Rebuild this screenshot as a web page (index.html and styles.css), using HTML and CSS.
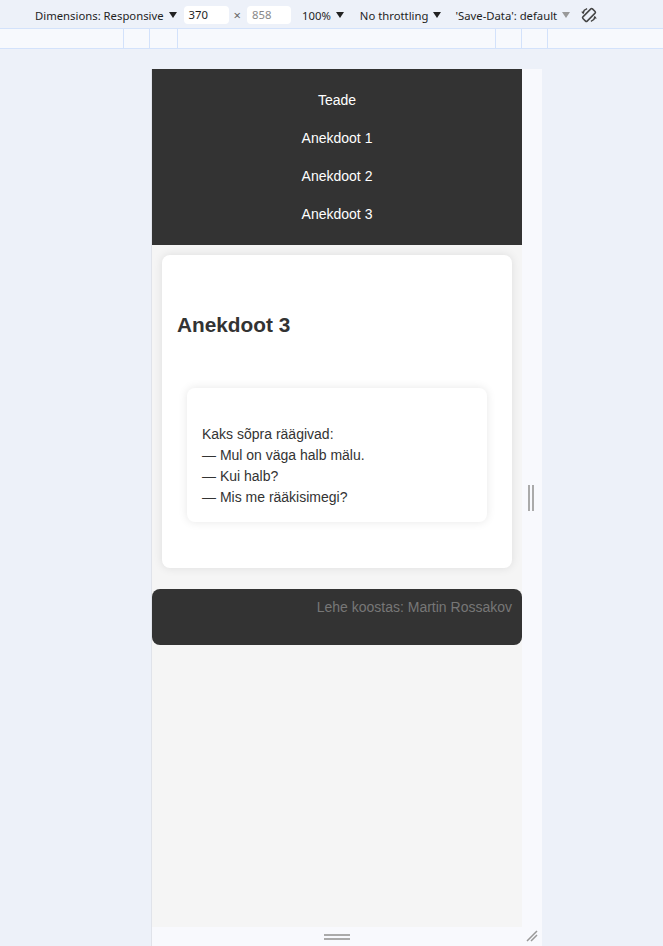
FILE: index.html
```html
<!DOCTYPE html>
<html lang="et">
<head>
    <meta charset="UTF-8">
    <meta name="viewport" content="width=device-width, initial-scale=1.0">
    <title>Anekdoodid</title>
    <link rel="stylesheet" href="styles.css">
</head>
<body>

    <div class="toolbar">
        <span class="tb-item tb-dims">Dimensions: Responsive<span class="arrow"></span></span>
        <span class="tb-input">370</span>
        <span class="tb-times">&times;</span>
        <span class="tb-input tb-input-dim">858</span>
        <span class="tb-item tb-zoom">100%<span class="arrow"></span></span>
        <span class="tb-item tb-throttle">No throttling<span class="arrow"></span></span>
        <span class="tb-item tb-save">'Save-Data': default<span class="arrow arrow-dim"></span></span>
        <svg class="tb-rotate" width="18" height="18" viewBox="0 0 24 24">
            <g fill="none" stroke="#444" stroke-width="2">
                <rect x="8" y="3" width="8" height="18" rx="1.5" transform="rotate(45 12 12)"/>
                <path d="M3.5 9.5 A9.5 9.5 0 0 1 9.5 3.5"/>
                <path d="M20.5 14.5 A9.5 9.5 0 0 1 14.5 20.5"/>
            </g>
            <path d="M1.5 7.5 L4.5 11 L6.2 7.2 Z" fill="#444"/>
            <path d="M22.5 16.5 L19.5 13 L17.8 16.8 Z" fill="#444"/>
        </svg>
    </div>

    <div class="ruler">
        <div class="ruler-seg" style="width: 124px"></div>
        <div class="ruler-seg" style="width: 26px"></div>
        <div class="ruler-seg" style="width: 28px"></div>
        <div class="ruler-seg" style="width: 318px"></div>
        <div class="ruler-seg" style="width: 26px"></div>
        <div class="ruler-seg" style="width: 26px"></div>
        <div class="ruler-seg"></div>
    </div>

    <div class="stage">
        <div class="device">
            <div class="viewport">
                <header class="site-header">
                    <nav class="nav">
                        <a href="#">Teade</a>
                        <a href="#">Anekdoot 1</a>
                        <a href="#">Anekdoot 2</a>
                        <a href="#">Anekdoot 3</a>
                    </nav>
                </header>

                <main class="content">
                    <section class="card">
                        <h2>Anekdoot 3</h2>
                        <div class="joke">
                            Kaks sõpra räägivad:<br>
                            — Mul on väga halb mälu.<br>
                            — Kui halb?<br>
                            — Mis me rääkisimegi?
                        </div>
                    </section>
                </main>

                <footer class="site-footer">Lehe koostas: Martin Rossakov</footer>
            </div>

            <div class="gutter-right">
                <span class="grip-v"></span>
            </div>
            <div class="gutter-bottom">
                <span class="grip-h"></span>
            </div>
            <div class="gutter-corner">
                <svg width="14" height="14" viewBox="0 0 14 14">
                    <path d="M2 12 L12 2 M6 12 L12 6" stroke="#999" stroke-width="1.5"/>
                </svg>
            </div>
        </div>
    </div>

</body>
</html>
```

FILE: styles.css
```css
body {
    margin: 0;
    background-color: #edf1f9;
    font-family: "Noto Sans", Arial, sans-serif;
}

/* devtools bar */
.toolbar {
    height: 26px;
    padding-top: 2px;
    display: flex;
    align-items: center;
    padding-left: 35px;
    border-bottom: 1px solid #d3e2fb;
    font-size: 11.3px;
    color: #1f1f1f;
    white-space: nowrap;
}
.tb-item {
    display: flex;
    align-items: center;
    margin-right: 16px;
}
.arrow {
    display: inline-block;
    width: 0;
    height: 0;
    margin-left: 5px;
    border-left: 4px solid transparent;
    border-right: 4px solid transparent;
    border-top: 6px solid #222;
}
.arrow-dim {
    border-top-color: #999;
}
.tb-dims {
    margin-right: 7px;
}
.tb-input {
    width: 40px;
    height: 18px;
    line-height: 18px;
    padding-left: 5px;
    background: #fff;
    border-radius: 4px;
}
.tb-input-dim {
    color: #888;
    margin-right: 11px;
    width: 39px;
}
.tb-times {
    color: #666;
    margin: 0 6px 0 5px;
    font-size: 13px;
}
.tb-throttle {
    margin-right: 14px;
}
.tb-save {
    margin-right: 10px;
}
.ruler {
    height: 19px;
    display: flex;
    background-color: #f7f9fd;
    border-bottom: 1px solid #d3e2fb;
}
.ruler-seg {
    border-right: 1px solid #d3e2fb;
    box-sizing: border-box;
}
.ruler-seg:last-child {
    border-right: none;
}

/* device frame */
.stage {
    padding: 20px 0 0 151px;
}
.device {
    display: grid;
    grid-template-columns: 370px 20px;
    grid-template-rows: 858px 19px;
    width: 390px;
    border-left: 1px solid #e0e3ea;
}
.viewport {
    background-color: #f5f5f5;
    font-family: "Liberation Sans", Arial, sans-serif;
    color: #333;
    overflow: hidden;
}
.gutter-right {
    background-color: #f8f9fd;
    display: flex;
    align-items: center;
    justify-content: center;
}
.grip-v {
    width: 2px;
    height: 26px;
    border-left: 2px solid #aaa;
    border-right: 2px solid #aaa;
    margin-right: 2px;
}
.gutter-bottom {
    background-color: #f8f9fd;
    display: flex;
    justify-content: center;
    padding-top: 7px;
    box-sizing: border-box;
}
.grip-h {
    width: 26px;
    height: 2px;
    border-top: 2px solid #aaa;
    border-bottom: 2px solid #aaa;
}
.gutter-corner {
    background-color: #f8f9fd;
    display: flex;
    align-items: flex-end;
    padding: 0 0 3px 3px;
    box-sizing: border-box;
}

/* page */
.site-header {
    background-color: #333;
    padding: 12px 0 12px;
}
.nav {
    display: flex;
    flex-direction: column;
    align-items: center;
}
.nav a {
    color: #fff;
    text-decoration: none;
    font-size: 14px;
    height: 38px;
    line-height: 38px;
}
.content {
    padding: 10px 10px 21px;
}
.card {
    background: #fff;
    border-radius: 8px;
    padding: 15px 15px 15px;
    box-shadow: 0 0 10px rgba(0, 0, 0, 0.1);
}
.card h2 {
    font-size: 20.8px;
    line-height: 23px;
    margin: 43px 0 52px;
}
.joke {
    margin: 0 10px 31px;
    padding: 36px 15px 14px;
    border-radius: 8px;
    box-shadow: 0 0 10px rgba(0, 0, 0, 0.1);
    font-size: 14px;
    line-height: 21px;
}
.site-footer {
    background-color: #333;
    color: #777;
    border-radius: 8px;
    text-align: right;
    font-size: 14px;
    line-height: 16px;
    padding: 10px 10px 30px;
}
```
